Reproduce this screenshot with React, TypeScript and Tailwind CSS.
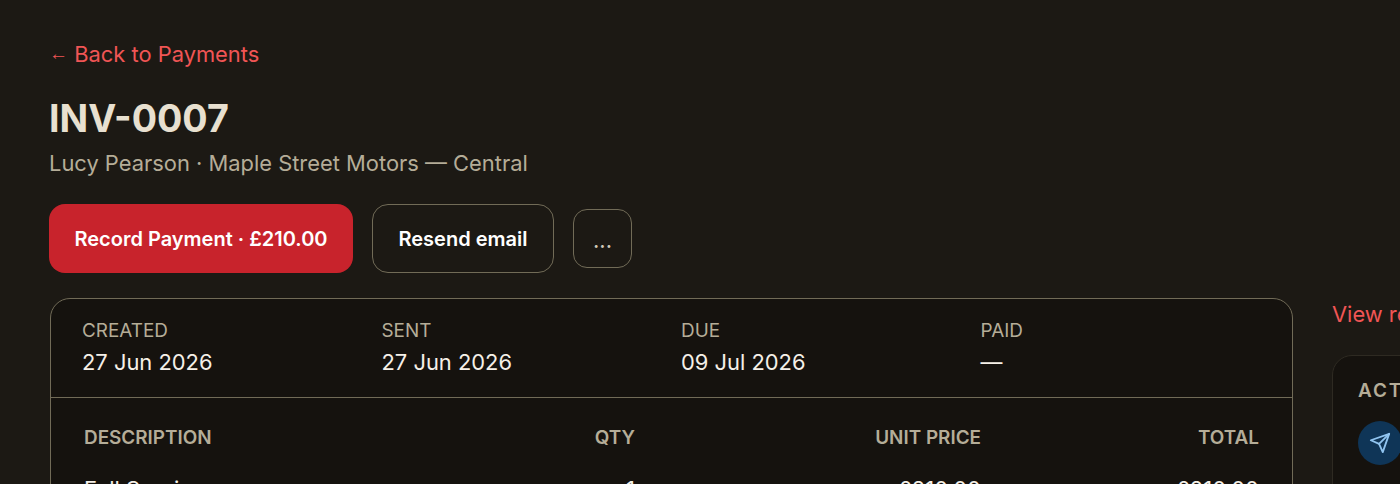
const dates = [
  { label: "CREATED", value: "27 Jun 2026" },
  { label: "SENT", value: "27 Jun 2026" },
  { label: "DUE", value: "09 Jul 2026" },
  { label: "PAID", value: "—" },
];

export default function App() {
  return (
    <div className="h-[484px] overflow-hidden bg-[#1c1914] pl-[49px] pt-[40px] font-['Inter',sans-serif]">
      <a className="block h-[29px] text-[21.9px] leading-[29px] text-[#f05555]">
        <span className="align-[2px] font-['Liberation_Sans',sans-serif] text-[19px] leading-none">←</span> Back to Payments
      </a>

      <h1 className="mt-[27px] text-[37.6px] font-bold leading-[46px] text-[#e8e0d0]">INV-0007</h1>
      <p className="mt-[7px] text-[21.9px] leading-[29px] text-[#b5ad98]">Lucy Pearson · Maple Street Motors — Central</p>

      <div className="mt-[26px] flex items-center gap-[19px]">
        <button className="h-[69px] w-[304px] rounded-[16px] bg-[#c8232c] text-[20px] font-semibold text-white">
          Record Payment · £210.00
        </button>
        <button className="h-[69px] w-[182px] rounded-[16px] border border-[#716b57] text-[20px] font-semibold text-white">
          Resend email
        </button>
        <button className="h-[59px] w-[59px] rounded-[14px] border border-[#716b57] pt-[3px] text-[22px] text-[#d0c8b8]">
          ...
        </button>
      </div>

      <div className="mt-[25px] flex items-start gap-[39px]">
        <div className="ml-[1px] w-[1243px] shrink-0 overflow-hidden rounded-[20px] border border-[#716b57] bg-[#15120e]">
          <div className="grid h-[99px] grid-cols-4 gap-[20px] border-b border-[#716b57] pl-[31px] pr-[32px] pt-[20px]">
            {dates.map((d) => (
              <div key={d.label}>
                <div className="text-[18.9px] leading-[24px] text-[#b5ad98]">{d.label}</div>
                <div className="mt-[5px] text-[21.9px] leading-[29px] text-[#f5f0e8]">{d.value}</div>
              </div>
            ))}
          </div>
          <div className="grid grid-cols-[1fr_130px_346px_278px] pl-[33px] pr-[33px] pt-[28px] text-[18.9px] font-semibold leading-[24px] text-[#b5ad98]">
            <div>DESCRIPTION</div>
            <div className="text-right">QTY</div>
            <div className="text-right">UNIT PRICE</div>
            <div className="text-right">TOTAL</div>
          </div>
          <div className="grid grid-cols-[1fr_130px_346px_278px] pl-[33px] pr-[33px] pt-[25px] text-[22px] leading-[28px] text-[#f5f0e8]">
            <div>Full Service</div>
            <div className="text-right">1</div>
            <div className="text-right">£210.00</div>
            <div className="text-right">£210.00</div>
          </div>
        </div>

        <div className="w-[400px] shrink-0">
          <div className="pt-[2px] text-[21.9px] leading-[29px] text-[#f05555]">View receipt</div>
          <div className="mt-[26px] h-[300px] rounded-[20px] border border-[#2e2a22] bg-[#15120e] px-[25px] pt-[23px]">
            <div className="text-[18.9px] font-semibold leading-[24px] tracking-[0.1em] text-[#b5ad98]">ACTIVITY</div>
            <div className="mt-[18px] flex h-[44px] w-[44px] items-center justify-center rounded-full bg-[#0f3557]">
              <svg width="22" height="22" viewBox="0 0 24 24" fill="none" stroke="#90c4f0" strokeWidth="2" strokeLinecap="round" strokeLinejoin="round">
                <line x1="22" y1="2" x2="11" y2="13" />
                <polygon points="22 2 15 22 11 13 2 9 22 2" />
              </svg>
            </div>
          </div>
        </div>
      </div>
    </div>
  );
}
